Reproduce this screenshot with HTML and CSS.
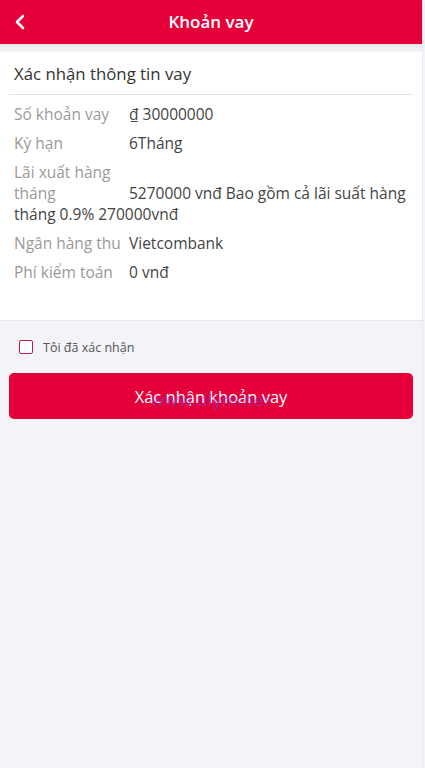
FILE: index.html
```html
<!DOCTYPE html>
<html lang="vi">
<head>
<meta charset="utf-8">
<meta name="viewport" content="width=device-width, initial-scale=1">
<title>Khoản vay</title>
<link rel="stylesheet" href="styles.css">
</head>
<body>
<div class="app">
  <header class="nav">
    <span class="back">
      <svg width="12" height="16" viewBox="0 0 12 16"><path d="M9 2 L3 8 L9 14" fill="none" stroke="#fff" stroke-width="2.6" stroke-linecap="round" stroke-linejoin="round"/></svg>
    </span>
    <h1 class="nav-title">Khoản vay</h1>
  </header>
  <section class="card">
    <h2 class="card-title">Xác nhận thông tin vay</h2>
    <div class="rows">
      <div class="row"><span class="label">Số khoản vay</span><span class="value"><span class="dong">₫</span> 30000000</span></div>
      <div class="row"><span class="label">Kỳ hạn</span><span class="value">6Tháng</span></div>
      <div class="row"><span class="label">Lãi xuất hàng tháng</span><span class="value">5270000 vnđ Bao gồm cả lãi suất hàng tháng 0.9% 270000vnđ</span></div>
      <div class="row"><span class="label">Ngân hàng thu</span><span class="value">Vietcombank</span></div>
      <div class="row"><span class="label">Phí kiểm toán</span><span class="value">0 vnđ</span></div>
    </div>
  </section>
  <label class="agree"><span class="box"></span><span class="agree-text">Tôi đã xác nhận</span></label>
  <div class="btn-wrap">
    <button class="btn" type="button">Xác nhận khoản vay</button>
    <span class="watermark">www.dlym.net</span>
  </div>
</div>
</body>
</html>
```
FILE: styles.css
```css
* { box-sizing: border-box; }
html, body { margin: 0; padding: 0; }
body {
  background: #f3f3f8;
  font-family: "Open Sans", "Noto Sans", sans-serif;
  color: #333;
  height: 768px;
}
.app {
  width: 423px;
  min-height: 768px;
  background: #f3f3f8;
  border-right: 1px solid #e8e8ee;
}
.nav {
  height: 44px;
  background: #e6003a;
  display: flex;
  align-items: center;
  justify-content: center;
  position: relative;
  box-shadow: 0 2px 6px rgba(0,0,0,0.08);
}
.back {
  position: absolute;
  left: 14px;
  top: 14px;
  width: 12px;
  height: 16px;
  display: flex;
}
.nav-title {
  margin: 0;
  color: #fff;
  font-size: 17px;
  font-weight: 600;
  line-height: 44px;
}
.card {
  margin-top: 8px;
  background: #fff;
  padding: 0 9px 37px 9px;
  border-bottom: 1px solid #e6e6ea;
}
.card-title {
  margin: 0;
  font-size: 16.8px;
  font-weight: 400;
  color: #333;
  height: 43px;
  line-height: 44px;
  padding-left: 5px;
  border-bottom: 1px solid #e3e3e3;
}
.rows {
  padding: 9px 5px 0 5px;
}
.row {
  font-size: 15.5px;
  line-height: 21px;
  margin-bottom: 8px;
}
.row:last-child { margin-bottom: 0; }
.label {
  display: inline-block;
  width: 115px;
  color: #9a9a9a;
  vertical-align: baseline;
}
.value { color: #444; }
.dong { text-decoration: underline; }
.agree {
  display: flex;
  align-items: center;
  gap: 10px;
  padding-left: 19px;
  height: 52px;
}
.box {
  width: 14px;
  height: 14px;
  border: 1px solid #c41a4c;
  border-radius: 2px;
  background: #fff;
}
.agree-text {
  font-size: 12.5px;
  color: #555;
}
.btn-wrap {
  position: relative;
  padding: 0 9px;
}
.btn {
  width: 100%;
  height: 46px;
  border: none;
  border-radius: 5px;
  background: #e6003a;
  color: #fff;
  font-family: "Open Sans", "Noto Sans", sans-serif;
  font-size: 16.5px;
}
.watermark {
  position: absolute;
  left: 0;
  right: 0;
  top: 15px;
  text-align: center;
  font-size: 17px;
  color: rgba(120, 60, 200, 0.6);
  pointer-events: none;
  letter-spacing: 0.5px;
}
```
